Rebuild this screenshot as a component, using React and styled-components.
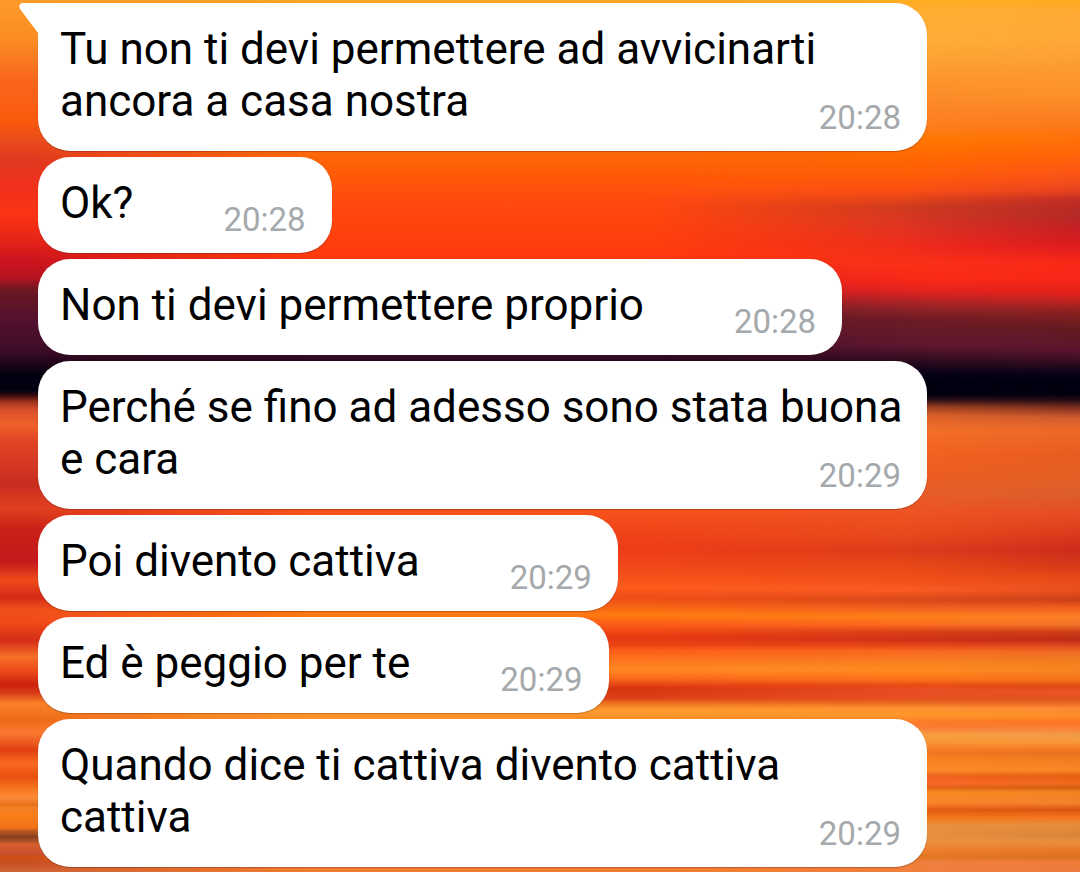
import React from "react";
import styled, { createGlobalStyle } from "styled-components";

const GlobalStyle = createGlobalStyle`
  *, *::before, *::after { box-sizing: border-box; }
  body { margin: 0; background: #f0803c; }
`;

/* Sunset wallpaper: each list is a vertical scan of [y, colour]. */
const sunset = {
  left: [
    [0, "#fd9a2a"], [40, "#fb8c22"], [80, "#f9661e"], [120, "#fb5a0c"], [140, "#ea4c1c"],
    [160, "#e0381f"], [185, "#f0301c"], [215, "#fb3414"], [240, "#e62418"], [260, "#cc141e"],
    [277, "#b81420"], [290, "#6a1820"], [320, "#541030"], [350, "#3e0c28"], [365, "#1c0418"],
    [375, "#020010"], [390, "#020010"], [395, "#300a10"], [402, "#a0341c"], [410, "#d8502a"],
    [425, "#f0602a"], [442, "#e04424"], [485, "#c82c20"], [508, "#e0401f"], [530, "#c82018"],
    [562, "#c41a1c"], [580, "#f04a1a"], [597, "#d42a18"], [610, "#f0501a"], [623, "#f04a1a"],
    [640, "#d42c18"], [657, "#f87028"], [673, "#e84418"], [685, "#cc2010"], [693, "#d83c18"],
    [703, "#fa8028"], [720, "#ee6a18"], [733, "#fa7830"], [750, "#e04010"], [763, "#fa6a20"],
    [777, "#ea5010"], [790, "#f87a20"], [798, "#fa8a38"], [805, "#e87018"], [808, "#f58025"],
    [817, "#fa7c18"], [828, "#f07018"], [831, "#b85a20"], [837, "#8a4020"], [841, "#a85028"],
    [844, "#d86030"], [853, "#c85030"], [857, "#d05018"], [862, "#c84e20"], [872, "#d06438"],
  ],
  centre: [
    [0, "#fca424"], [100, "#fc8018"], [150, "#fc6a08"], [175, "#ff5a06"], [200, "#ff4a10"],
    [230, "#ff420c"], [256, "#ff3a0e"], [285, "#d01820"], [310, "#641828"], [355, "#380a26"],
    [380, "#020010"], [395, "#020010"], [420, "#f07028"], [509, "#f8541c"], [530, "#f0451a"],
    [550, "#ee3c18"], [570, "#f04a18"], [587, "#ff5c1c"], [598, "#ee4c18"], [615, "#ff7a10"],
    [625, "#fa5a18"], [637, "#e83812"], [645, "#ea4414"], [650, "#fc5c18"], [660, "#fd7420"],
    [670, "#ff8822"], [678, "#fc6a1c"], [688, "#d83410"], [698, "#dc4018"], [704, "#f07820"],
    [710, "#ff9c30"], [717, "#fc9028"], [760, "#f88420"], [872, "#f07c30"],
  ],
  right: [
    [0, "#ffae20"], [12, "#ffb034"], [40, "#feae38"], [70, "#fd9c30"], [100, "#fc8a28"],
    [125, "#fe7e20"], [140, "#ff7800"], [155, "#ff6a00"], [175, "#ff5c08"], [190, "#fc5014"],
    [207, "#cc3a20"], [225, "#dc3424"], [245, "#ee2c1c"], [265, "#fc3018"], [280, "#fa2a18"],
    [292, "#e02420"], [305, "#a02428"], [320, "#6e1c24"], [345, "#601830"], [360, "#300c20"],
    [372, "#0c0418"], [380, "#020010"], [394, "#020010"], [400, "#301018"], [407, "#a04420"],
    [415, "#dc6028"], [430, "#f47028"], [450, "#f46420"], [475, "#ec5c20"], [490, "#e8602a"],
    [510, "#ee5424"], [535, "#e84a1c"], [550, "#dc3c1c"], [565, "#e84818"], [580, "#f25018"],
    [590, "#fa5c24"], [600, "#d84818"], [608, "#f06020"], [617, "#ff8018"], [625, "#fa6a20"],
    [632, "#d84018"], [640, "#d03018"], [646, "#e84a18"], [651, "#f86820"], [660, "#f87c20"],
    [670, "#ff8c20"], [680, "#fc7018"], [685, "#ea4c18"], [692, "#e85028"], [698, "#e85020"],
    [703, "#e86820"], [708, "#ff9030"], [715, "#ff9828"], [722, "#fc7c28"], [728, "#fa7c38"],
    [735, "#f8a040"], [742, "#f89838"], [748, "#f88028"], [753, "#f47820"], [760, "#f88420"],
    [770, "#fc8c28"], [776, "#ee6420"], [783, "#fa6828"], [788, "#e46414"], [792, "#fb8c24"],
    [803, "#fb842c"], [810, "#e45c10"], [818, "#f07818"], [825, "#e89040"], [840, "#ea9040"],
    [850, "#f08030"], [857, "#e07820"], [862, "#f08040"], [872, "#f0803c"],
  ],
  edge: [
    [0, "#ffaa20"], [12, "#ffaa34"], [40, "#ffa838"], [70, "#fd9a30"], [100, "#fc8e28"],
    [120, "#fc7c20"], [140, "#ff7008"], [155, "#ff6408"], [175, "#fc5418"], [190, "#e84420"],
    [200, "#c02c24"], [215, "#b42a26"], [228, "#c42024"], [245, "#dc1a1e"], [262, "#f82818"],
    [278, "#f82818"], [292, "#e42018"], [300, "#c42420"], [312, "#8a2020"], [328, "#641c20"],
    [350, "#5c1430"], [362, "#340c20"], [372, "#0c0418"], [380, "#020010"], [394, "#020010"],
    [400, "#240c14"], [408, "#803020"], [418, "#d05c30"], [430, "#ec6828"], [455, "#e85c20"],
    [475, "#e46024"], [495, "#dc5c2c"], [515, "#e44c24"], [532, "#dc3c1c"], [550, "#cc2c1c"],
    [565, "#d43818"], [580, "#e84c18"], [590, "#e85020"], [600, "#cc4018"], [608, "#f06020"],
    [617, "#ff8028"], [625, "#f07028"], [632, "#cc3c14"], [640, "#bc2c18"], [646, "#e04c20"],
    [652, "#f06c24"], [660, "#f07c20"], [670, "#f88420"], [680, "#f47018"], [686, "#dc4c18"],
    [692, "#ec5424"], [698, "#dc5420"], [703, "#e86820"], [708, "#fc8838"], [715, "#fc9028"],
    [722, "#fc7420"], [728, "#fa8038"], [735, "#f09c48"], [742, "#f89838"], [748, "#f87c28"],
    [753, "#e87020"], [760, "#f07c20"], [770, "#f88828"], [776, "#e46010"], [783, "#f46820"],
    [788, "#d06010"], [792, "#f08420"], [803, "#f4802c"], [810, "#d85410"], [818, "#f87820"],
    [825, "#e48c3c"], [835, "#d88438"], [842, "#ea9040"], [850, "#e87828"], [857, "#d87020"],
    [862, "#f07c38"], [872, "#e87c40"],
  ],
};

const scan = (stops) =>
  `linear-gradient(to bottom, ${stops.map(([y, c]) => `${c} ${y}px`).join(", ")})`;

const Wallpaper = styled.div`
  position: absolute;
  inset: 0;
  z-index: -1;
  background: ${(p) => scan(sunset[p.$band])};
  mask-image: ${(p) => p.$fade || "none"};
`;

const Chat = styled.main`
  position: relative;
  z-index: 0;
  min-height: 100vh;
  overflow: hidden;
  padding: 3px 153px 5px 38px;
  font-family: Roboto, "Liberation Sans", sans-serif;
`;

const Messages = styled.ol`
  display: flex;
  flex-direction: column;
  align-items: flex-start;
  gap: 6px;
  margin: 0;
  padding: 0;
  list-style: none;
`;

const Bubble = styled.li`
  position: relative;
  max-width: 100%;
  padding: 20px 23px 14px 22px;
  border-radius: ${(p) => (p.$first ? "0 32px 32px 32px" : "32px")};
  background: #fff;
  box-shadow: 0 1px 1px rgba(60, 30, 20, 0.3);
`;

const Tail = styled.svg`
  position: absolute;
  top: 0;
  right: 100%;
  width: 20px;
  height: 31px;
  margin-right: -1px;
  fill: #fff;
`;

const Text = styled.p`
  display: flow-root;
  margin: 0;
  color: #000;
  font-size: 44px;
  line-height: 52px;
`;

/* Floats beside the last line of the message and hangs below it. */
const Time = styled.time`
  float: right;
  margin: 24px 3px 0 90px;
  color: #a5a9ab;
  font-size: 33px;
  line-height: 38px;
`;

const messages = [
  { text: "Tu non ti devi permettere ad avvicinarti ancora a casa nostra", time: "20:28" },
  { text: "Ok?", time: "20:28" },
  { text: "Non ti devi permettere proprio", time: "20:28" },
  { text: "Perché se fino ad adesso sono stata buona e cara", time: "20:29" },
  { text: "Poi divento cattiva", time: "20:29" },
  { text: "Ed è peggio per te", time: "20:29" },
  { text: "Quando dice ti cattiva divento cattiva cattiva", time: "20:29" },
];

export default function App() {
  return (
    <>
      <GlobalStyle />
      <Chat>
        <Wallpaper $band="right" />
        <Wallpaper $band="edge" $fade="linear-gradient(to right, transparent 84%, #000 100%)" />
        <Wallpaper $band="centre" $fade="linear-gradient(to right, #000 60%, transparent 86%)" />
        <Wallpaper $band="left" $fade="linear-gradient(to right, #000 3%, transparent 28%)" />
        <Messages>
          {messages.map((m, i) => (
            <Bubble key={m.text} $first={i === 0}>
              {i === 0 && (
                <Tail viewBox="0 0 20 31" aria-hidden="true">
                  <path d="M20 0H4C0.5 0 -0.8 3.5 1.2 6.2L19 30V31H20Z" />
                </Tail>
              )}
              <Text>
                {m.text}
                <Time>{m.time}</Time>
              </Text>
            </Bubble>
          ))}
        </Messages>
      </Chat>
    </>
  );
}
